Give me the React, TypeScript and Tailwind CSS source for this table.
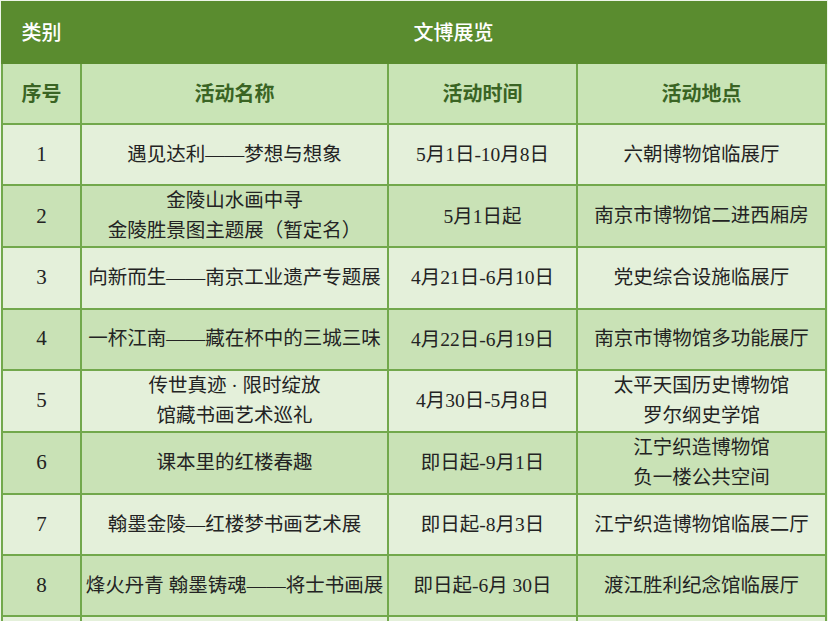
import React from 'react';

interface Row {
  no: string;
  name: string[];
  time: string;
  place: string[];
}

const rows: Row[] = [
  { no: '1', name: ['遇见达利——梦想与想象'], time: '5月1日-10月8日', place: ['六朝博物馆临展厅'] },
  { no: '2', name: ['金陵山水画中寻', '金陵胜景图主题展（暂定名）'], time: '5月1日起', place: ['南京市博物馆二进西厢房'] },
  { no: '3', name: ['向新而生——南京工业遗产专题展'], time: '4月21日-6月10日', place: ['党史综合设施临展厅'] },
  { no: '4', name: ['一杯江南——藏在杯中的三城三味'], time: '4月22日-6月19日', place: ['南京市博物馆多功能展厅'] },
  { no: '5', name: ['传世真迹 · 限时绽放', '馆藏书画艺术巡礼'], time: '4月30日-5月8日', place: ['太平天国历史博物馆', '罗尔纲史学馆'] },
  { no: '6', name: ['课本里的红楼春趣'], time: '即日起-9月1日', place: ['江宁织造博物馆', '负一楼公共空间'] },
  { no: '7', name: ['翰墨金陵—红楼梦书画艺术展'], time: '即日起-8月3日', place: ['江宁织造博物馆临展二厅'] },
  { no: '8', name: ['烽火丹青 翰墨铸魂——将士书画展'], time: '即日起-6月 30日', place: ['渡江胜利纪念馆临展厅'] },
  { no: '', name: [''], time: '', place: [''] },
];

const cell = 'border-2 border-[#72a84c] text-center align-middle px-1';

const Lines: React.FC<{ lines: string[] }> = ({ lines }) => (
  <div className="flex flex-col items-center leading-[30px]">
    {lines.map((l, i) => (
      <span key={i} className="whitespace-nowrap">{l}</span>
    ))}
  </div>
);

const App: React.FC = () => {
  return (
    <div
      className="w-[828px] h-[621px] overflow-hidden bg-[#eef5e8] pt-[1px] pl-[1px]"
      style={{ fontFamily: '"Liberation Serif", "Noto Sans CJK SC", serif' }}
    >
      <table className="w-[826px] table-fixed border-collapse text-[19.5px] text-[#232323]">
        <colgroup>
          <col className="w-[79px]" />
          <col className="w-[307px]" />
          <col className="w-[189px]" />
          <col />
        </colgroup>
        <tbody>
          <tr className="h-[61px] bg-[#5a8c2f] text-white text-[20px]">
            <td className="border-2 border-[#5a8c2f] text-center font-medium">类别</td>
            <td colSpan={3} className="border-2 border-[#5a8c2f] text-center font-medium">文博展览</td>
          </tr>
          <tr className="h-[61px] bg-[#c9e4b6] text-[#3a6424] font-bold text-[20px]">
            <td className={cell}>序号</td>
            <td className={cell}>活动名称</td>
            <td className={cell}>活动时间</td>
            <td className={cell}>活动地点</td>
          </tr>
          {rows.map((r, i) => (
            <tr
              key={i}
              className={`h-[61.3px] ${i % 2 === 0 ? 'bg-[#e4f0da]' : 'bg-[#c9e2b6]'}`}
            >
              <td className={`${cell} text-[21px]`}>{r.no}</td>
              <td className={cell}><Lines lines={r.name} /></td>
              <td className={cell}>{r.time}</td>
              <td className={cell}><Lines lines={r.place} /></td>
            </tr>
          ))}
        </tbody>
      </table>
    </div>
  );
};

export default App;
